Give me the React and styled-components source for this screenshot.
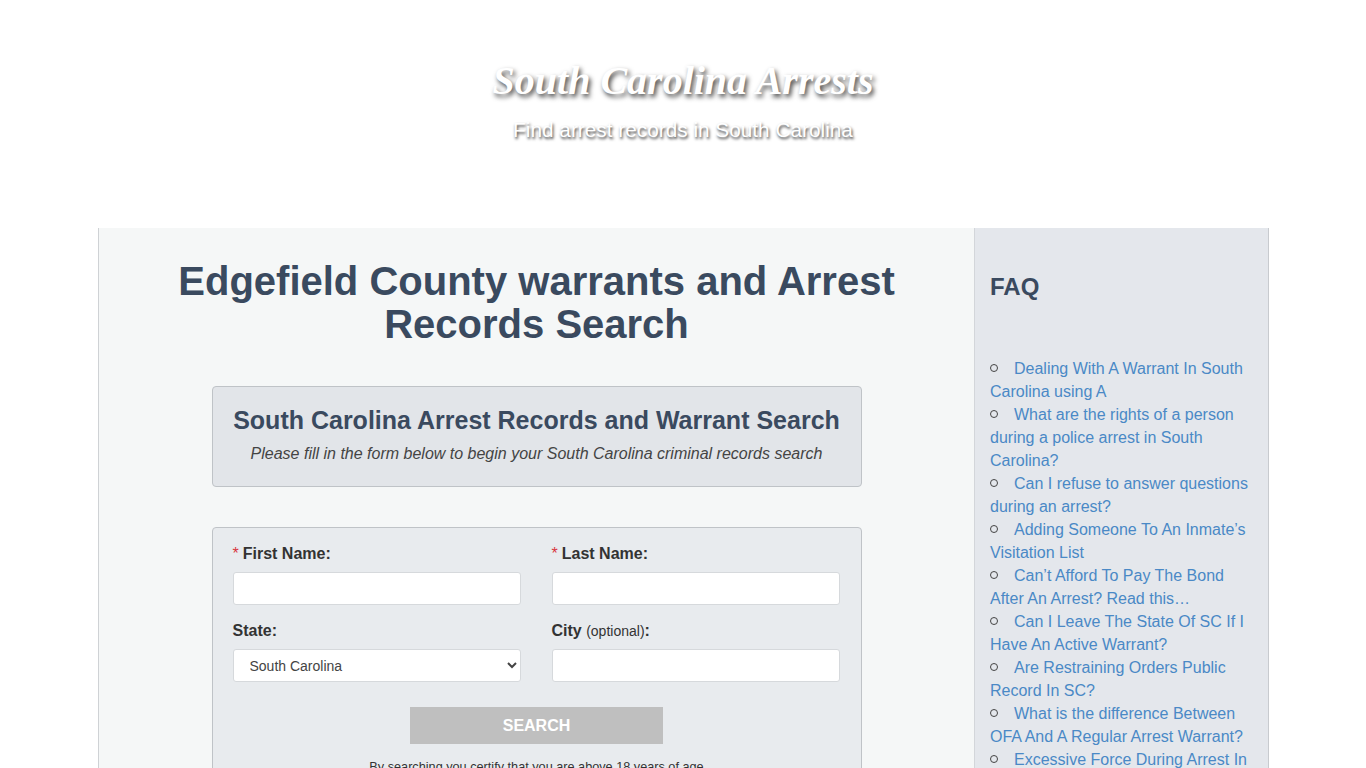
import React from 'react'
import styled, { createGlobalStyle } from 'styled-components'

const GlobalStyle = createGlobalStyle`
  html, body {
    margin: 0;
    padding: 0;
    background: #fff;
    font-family: "Liberation Sans", Arial, sans-serif;
    font-size: 16px;
    color: #333;
  }
  * {
    box-sizing: border-box;
  }
`

const Header = styled.header`
  height: 228px;
  display: flex;
  flex-direction: column;
  align-items: center;
  padding-top: 58px;
`

const SiteTitle = styled.div`
  font-family: "Liberation Serif", "Times New Roman", serif;
  font-style: italic;
  font-weight: bold;
  font-size: 40px;
  line-height: 46px;
  color: #fff;
  text-shadow: 2px 3px 5px rgba(0, 0, 0, 0.75);
`

const SiteTagline = styled.div`
  margin-top: 14px;
  font-size: 20.8px;
  line-height: 24px;
  color: #fff;
  text-shadow: 1px 2px 3px rgba(0, 0, 0, 0.8);
`

const Container = styled.div`
  width: 1170px;
  margin: 0 auto;
  display: grid;
  grid-template-columns: 875px 295px;
  border-left: 1px solid #cfd2d5;
  min-height: 540px;
`

const Main = styled.main`
  background: #f5f7f7;
  padding: 32px 0 0;
  display: flex;
  flex-direction: column;
  align-items: center;
`

const PageTitle = styled.h1`
  margin: 0;
  width: 800px;
  text-align: center;
  font-size: 40px;
  line-height: 43px;
  font-weight: bold;
  color: #3a4a5f;
`

const Panel = styled.div`
  width: 650px;
  background: ${p => (p.$dark ? '#e2e5e9' : '#e8ebee')};
  border: 1px solid #bfc3c7;
  border-radius: 4px;
  margin-top: ${p => p.$top}px;
  padding: ${p => p.$pad};
`

const PanelTitle = styled.h2`
  margin: 0;
  text-align: center;
  font-size: 25px;
  line-height: 30px;
  font-weight: bold;
  color: #3a4a5f;
`

const PanelNote = styled.p`
  margin: 9px 0 0;
  text-align: center;
  font-style: italic;
  font-size: 16px;
  line-height: 20px;
  color: #444;
`

const FieldGrid = styled.div`
  display: grid;
  grid-template-columns: 288px 288px;
  column-gap: 31px;
  row-gap: 16px;
`

const Field = styled.div`
  display: flex;
  flex-direction: column;
`

const Label = styled.label`
  font-size: 16px;
  line-height: 20px;
  font-weight: bold;
  color: #333;
  margin-bottom: 8px;
`

const Req = styled.span`
  color: #d9363e;
  font-weight: normal;
  margin-right: 4px;
`

const Optional = styled.span`
  font-weight: normal;
  font-size: 14px;
`

const Input = styled.input`
  height: 33px;
  width: 100%;
  border: 1px solid #d6d9dc;
  border-radius: 3px;
  background: #fff;
  font-family: inherit;
  font-size: 14px;
  padding: 0 12px;
`

const Select = styled.select`
  height: 33px;
  width: 100%;
  border: 1px solid #d6d9dc;
  border-radius: 3px;
  background: #fff;
  font-family: inherit;
  font-size: 14px;
  color: #444;
  padding: 0 12px;
`

const Actions = styled.div`
  display: flex;
  flex-direction: column;
  align-items: center;
  margin-top: 25px;
`

const SearchButton = styled.button`
  width: 253px;
  height: 37px;
  border: none;
  background: #bfbfbf;
  color: #fff;
  font-family: inherit;
  font-weight: bold;
  font-size: 16px;
  cursor: pointer;
`

const Disclaimer = styled.p`
  margin: 15px 0 0;
  font-size: 12.7px;
  line-height: 16px;
  color: #333;
`

const Sidebar = styled.aside`
  background: #e4e7ec;
  border-left: 1px solid #d3d6da;
  border-right: 1px solid #c8cbcf;
  padding: 42px 15px 0;
`

const SideTitle = styled.h3`
  margin: 0;
  font-size: 24px;
  line-height: 34px;
  font-weight: bold;
  color: #3a4a5f;
`

const FaqList = styled.ul`
  list-style: none;
  margin: 53px 0 0;
  padding: 0;
`

const FaqItem = styled.li`
  font-size: 16px;
  line-height: 23px;
  color: #333;

  &::before {
    content: '';
    display: inline-block;
    width: 6px;
    height: 6px;
    border: 1px solid #444;
    border-radius: 50%;
    margin: 0 16px 3px 0;
    vertical-align: middle;
  }

  a {
    color: #4a89c6;
    text-decoration: none;
  }
`

const faqs = [
  'Dealing With A Warrant In South Carolina using A',
  'What are the rights of a person during a police arrest in South Carolina?',
  'Can I refuse to answer questions during an arrest?',
  'Adding Someone To An Inmate\u2019s Visitation List',
  'Can\u2019t Afford To Pay The Bond After An Arrest? Read this\u2026',
  'Can I Leave The State Of SC If I Have An Active Warrant?',
  'Are Restraining Orders Public Record In SC?',
  'What is the difference Between OFA And A Regular Arrest Warrant?',
  'Excessive Force During Arrest In South Carolina',
]

const App = () => {
  return (
    <>
      <GlobalStyle />
      <Header>
        <SiteTitle>South Carolina Arrests</SiteTitle>
        <SiteTagline>Find arrest records in South Carolina</SiteTagline>
      </Header>
      <Container>
        <Main>
          <PageTitle>Edgefield County warrants and Arrest Records Search</PageTitle>
          <Panel $dark $top={40} $pad='18px 20px 22px'>
            <PanelTitle>South Carolina Arrest Records and Warrant Search</PanelTitle>
            <PanelNote>
              Please fill in the form below to begin your South Carolina criminal records search
            </PanelNote>
          </Panel>
          <Panel $top={40} $pad='16px 20px 20px'>
            <FieldGrid>
              <Field>
                <Label><Req>*</Req>First Name:</Label>
                <Input type='text' />
              </Field>
              <Field>
                <Label><Req>*</Req>Last Name:</Label>
                <Input type='text' />
              </Field>
              <Field>
                <Label>State:</Label>
                <Select defaultValue='SC'>
                  <option value='SC'>South Carolina</option>
                </Select>
              </Field>
              <Field>
                <Label>City <Optional>(optional)</Optional>:</Label>
                <Input type='text' />
              </Field>
            </FieldGrid>
            <Actions>
              <SearchButton type='button'>SEARCH</SearchButton>
              <Disclaimer>By searching you certify that you are above 18 years of age</Disclaimer>
            </Actions>
          </Panel>
        </Main>
        <Sidebar>
          <SideTitle>FAQ</SideTitle>
          <FaqList>
            {faqs.map(q => (
              <FaqItem key={q}>
                <a href='#'>{q}</a>
              </FaqItem>
            ))}
          </FaqList>
        </Sidebar>
      </Container>
    </>
  )
}

export default App
